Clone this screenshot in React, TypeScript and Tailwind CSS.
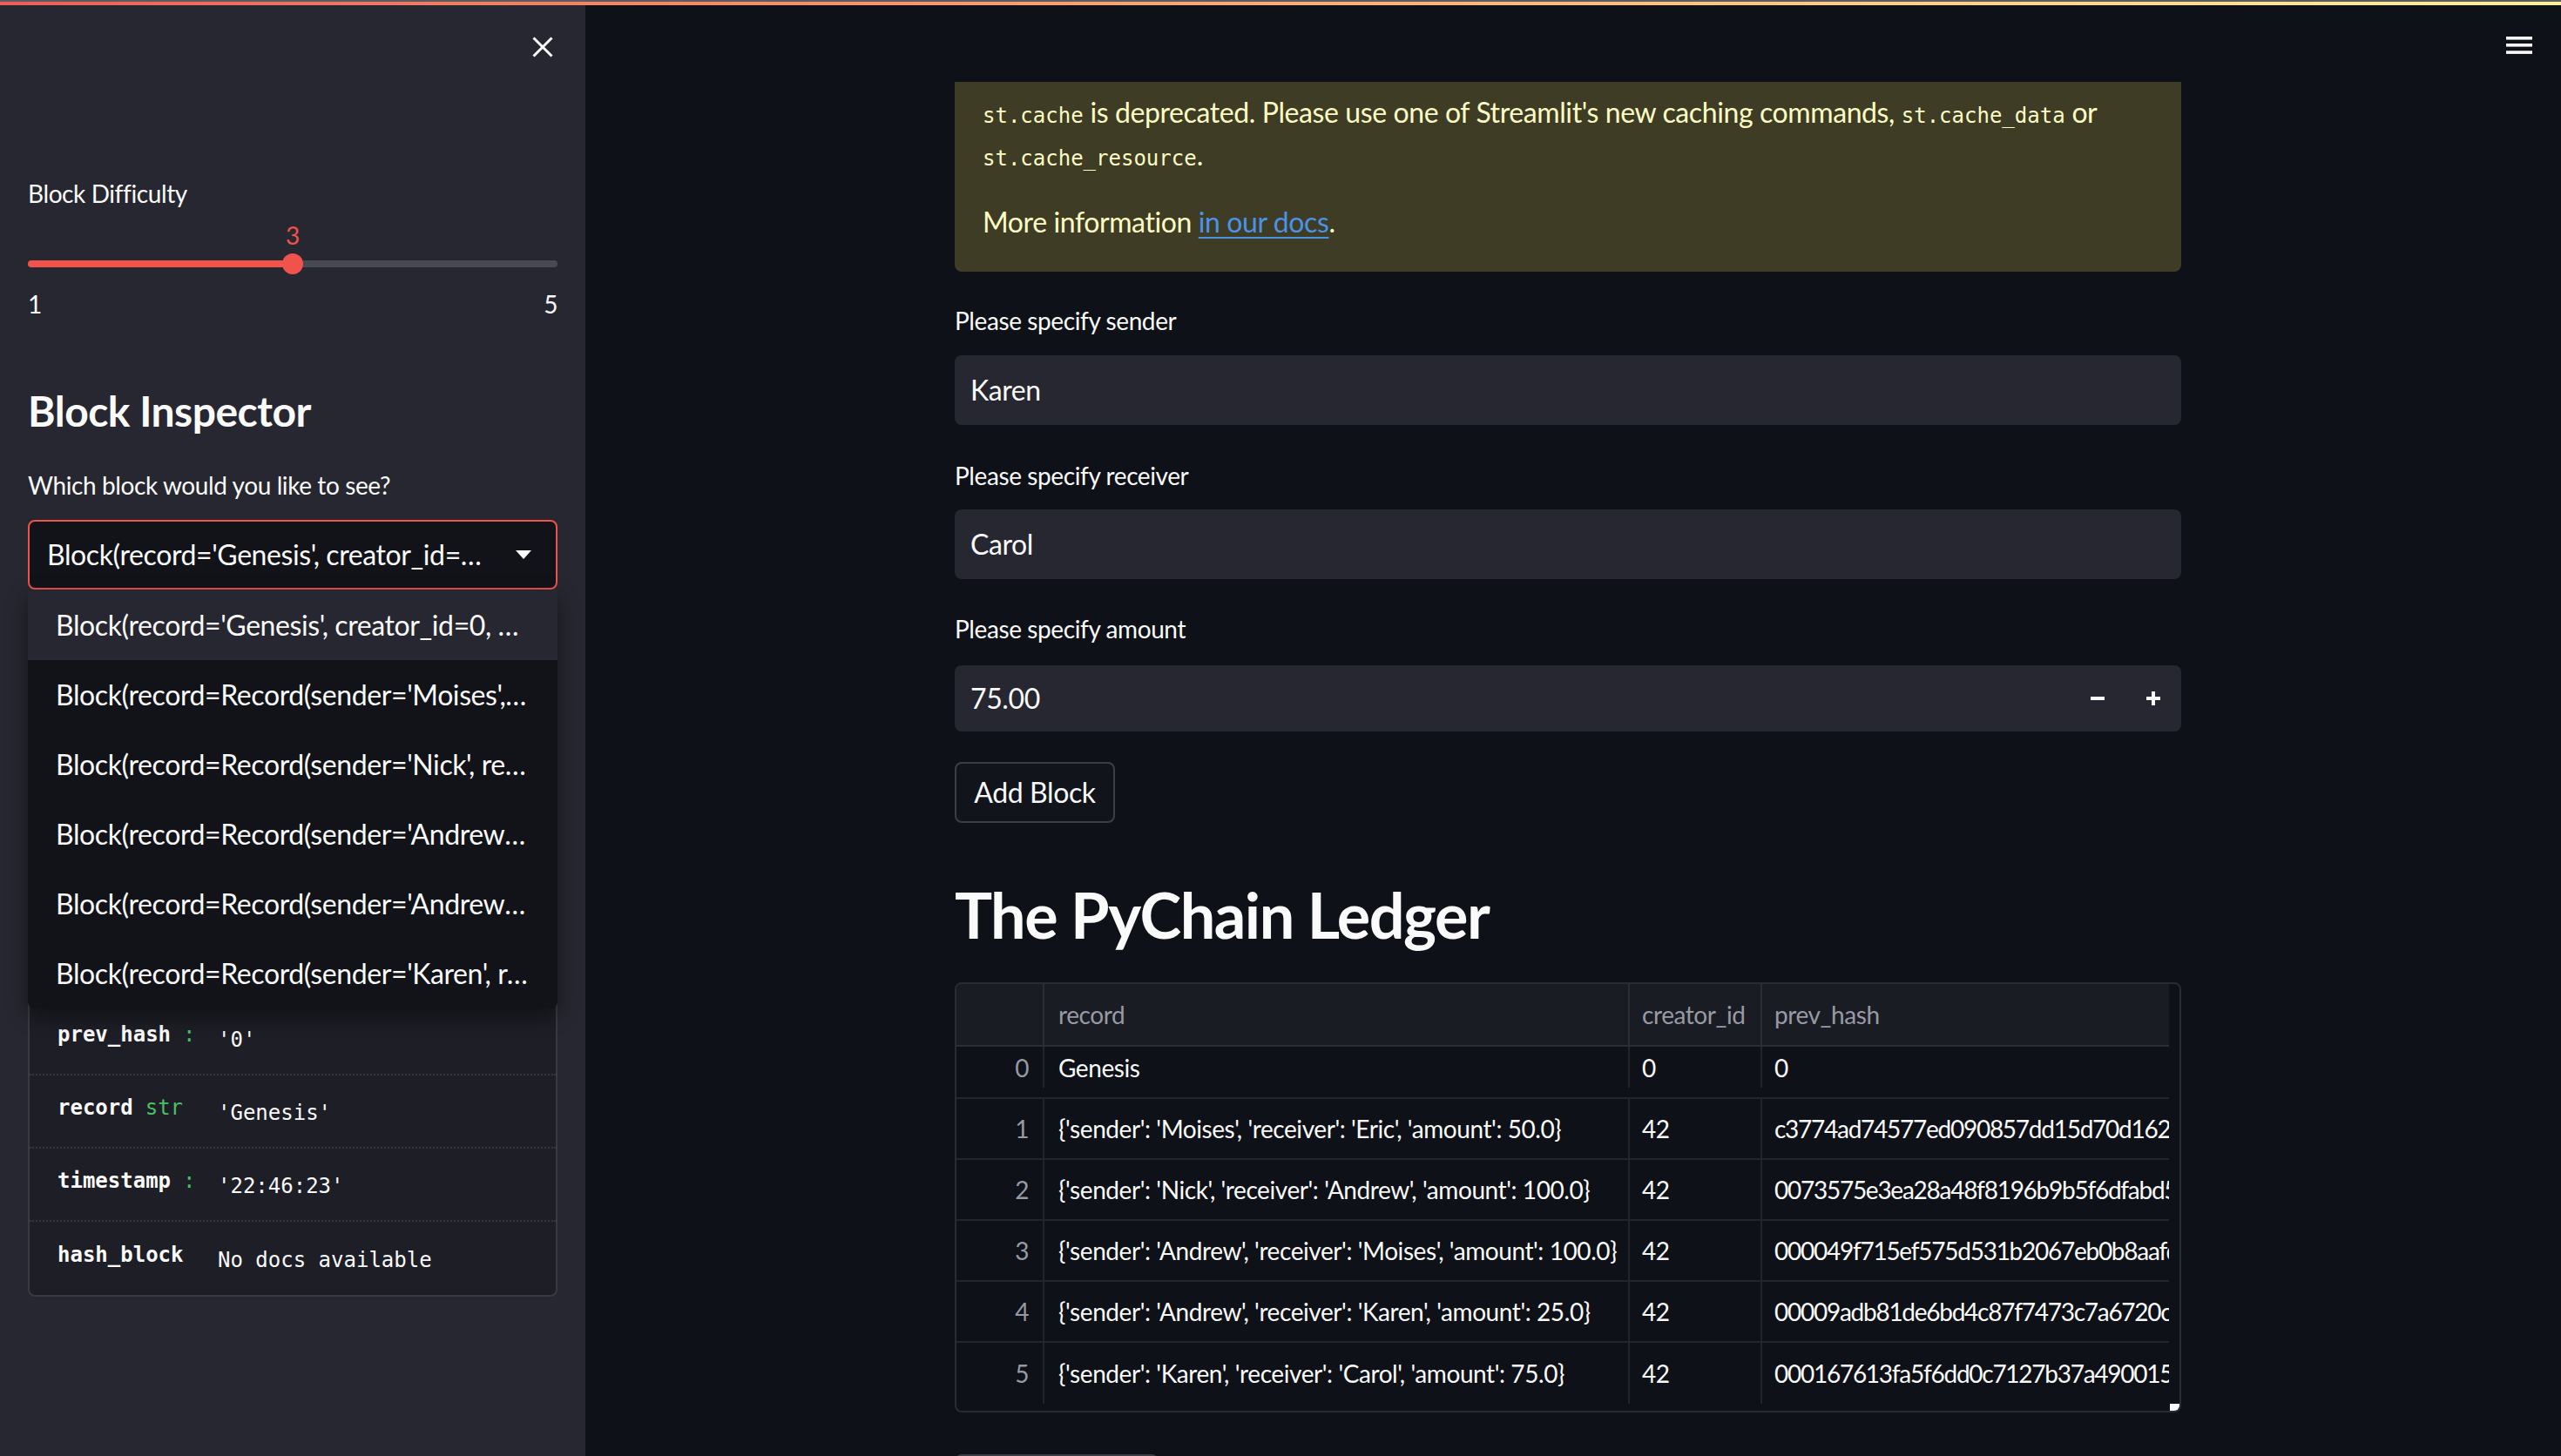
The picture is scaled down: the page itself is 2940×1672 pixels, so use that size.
import React from "react";

const options = [
  "Block(record='Genesis', creator_id=0, prev_hash='0', timestamp='22:46:23', nonce=0)",
  "Block(record=Record(sender='Moises', receiver='Eric', amount=50.0), creator_id=42)",
  "Block(record=Record(sender='Nick', receiver='Andrew', amount=100.0), creator_id=42)",
  "Block(record=Record(sender='Andrew', receiver='Moises', amount=100.0), creator_id=42)",
  "Block(record=Record(sender='Andrew', receiver='Karen', amount=25.0), creator_id=42)",
  "Block(record=Record(sender='Karen', receiver='Carol', amount=75.0), creator_id=42)",
];

const ledger = [
  { idx: 0, record: "Genesis", creator: "0", hash: "0" },
  {
    idx: 1,
    record: "{'sender': 'Moises', 'receiver': 'Eric', 'amount': 50.0}",
    creator: "42",
    hash: "c3774ad74577ed090857dd15d70d16263f0a9be2c41d7e8a",
  },
  {
    idx: 2,
    record: "{'sender': 'Nick', 'receiver': 'Andrew', 'amount': 100.0}",
    creator: "42",
    hash: "0073575e3ea28a48f8196b9b5f6dfabd57c0e1a93d2b44f1",
  },
  {
    idx: 3,
    record: "{'sender': 'Andrew', 'receiver': 'Moises', 'amount': 100.0}",
    creator: "42",
    hash: "000049f715ef575d531b2067eb0b8aafd4c3e1b9a0f27d65",
  },
  {
    idx: 4,
    record: "{'sender': 'Andrew', 'receiver': 'Karen', 'amount': 25.0}",
    creator: "42",
    hash: "00009adb81de6bd4c87f7473c7a6720c8e1f04b3d9a6c257",
  },
  {
    idx: 5,
    record: "{'sender': 'Karen', 'receiver': 'Carol', 'amount': 75.0}",
    creator: "42",
    hash: "000167613fa5f6dd0c7127b37a49001564b2e8d0c9f3a17e",
  },
];

const inspectRows = [
  { key: "prev_hash", type: ":", value: "'0'" },
  { key: "record", type: "str", value: "'Genesis'" },
  { key: "timestamp", type: ":", value: "'22:46:23'" },
  { key: "hash_block", type: "", value: "No docs available" },
];

const mono = "font-['DejaVu_Sans_Mono',monospace] tracking-normal";

const InspectRow = ({ k, type, value, last }: { k: string; type: string; value: string; last?: boolean }) => (
  <div
    className={`h-[84px] flex items-center pl-[32px] ${mono} text-[24px] ${
      last ? "" : "border-b-2 border-dotted border-[#33343d]"
    }`}
  >
    <div className="w-[184px] flex items-center gap-[14px] overflow-hidden whitespace-nowrap -mt-[9px]">
      <span className="font-bold text-[#fafafa]">{k}</span>
      <span className="text-[#4cbf63]">{type}</span>
    </div>
    <span className="text-[#fafafa] mt-[3px]">{value}</span>
  </div>
);

const Sidebar = () => (
  <aside className="w-[672px] shrink-0 h-full bg-[#262730] px-[32px] flex flex-col">
    <div className="pt-[42px] flex justify-end pr-[5px]">
      <svg width="24" height="24" viewBox="0 0 24 24">
        <path d="M1.5 1.5 L22.5 22.5 M22.5 1.5 L1.5 22.5" stroke="#fafafa" strokeWidth="3" />
      </svg>
    </div>

    <div className="mt-[136px] text-[28px] leading-[40px]">Block Difficulty</div>

    <div className="mt-[10px] text-[28px] leading-[36px] text-[#f0524c]">
      <span className="inline-block w-[32px] text-center ml-[288px]">3</span>
    </div>
    <div className="mt-[3px] h-[24px] relative flex items-center">
      <div className="h-[8px] w-[304px] bg-[#f0524c] rounded-l-full" />
      <div className="h-[8px] flex-1 bg-[#474953] rounded-r-full" />
      <div className="absolute left-[292px] top-0 w-[24px] h-[24px] rounded-full bg-[#f0524c]" />
    </div>
    <div className="mt-[16px] flex justify-between text-[28px] leading-[36px]">
      <span>1</span>
      <span>5</span>
    </div>

    <h2 className="mt-[76px] text-[48px] leading-[58px] font-bold tracking-[-0.5px]">Block Inspector</h2>
    <div className="mt-[36px] text-[28px] leading-[40px]">Which block would you like to see?</div>

    <div className="relative mt-[20px]">
      <div className="h-[80px] rounded-lg border-2 border-[#f0524c] bg-[#111319] flex items-center pl-[20px] pr-[28px]">
        <span className="w-[504px] truncate text-[32px]">{options[0]}</span>
        <div className="flex-1" />
        <svg width="18" height="10" viewBox="0 0 18 10">
          <polygon points="0,0 18,0 9,10" fill="#fafafa" />
        </svg>
      </div>

      {/* help() output of the selected block; its top rows sit under the open menu */}
      <div className="mt-[32px] rounded-lg border-2 border-[#393a43] bg-[#1d1e26]">
        <div className="h-[440px]" />
        {inspectRows.map((r, i) => (
          <InspectRow key={r.key} k={r.key} type={r.type} value={r.value} last={i === inspectRows.length - 1} />
        ))}
      </div>

      <div className="absolute left-0 right-0 top-[81px] z-10 rounded-b-lg overflow-hidden bg-[#111319] shadow-[0_8px_24px_rgba(0,0,0,0.45)]">
        {options.map((o, i) => (
          <div
            key={i}
            className={`h-[80px] flex items-center pl-[32px] text-[32px] ${i === 0 ? "bg-[#262730]" : ""}`}
          >
            <span className="w-[542px] truncate">{o}</span>
          </div>
        ))}
      </div>
    </div>
  </aside>
);

const Field = ({ label, value, top, gap }: { label: string; value: string; top: string; gap: string }) => (
  <>
    <div className={`${top} text-[28px] leading-[40px]`}>{label}</div>
    <div className={`${gap} h-[80px] rounded-lg bg-[#262730] flex items-center pl-[18px] text-[32px]`}>{value}</div>
  </>
);

const Ledger = () => (
  <div className="mt-[35px] w-[1408px] h-[494px] rounded-lg border-2 border-[#2a2c34] overflow-hidden text-[28px] tracking-[-0.015em]">
    <div className="w-[1392px]">
      <div className="h-[72px] flex bg-[#1a1c23] border-b-2 border-[#2c2e37] text-[#979aa3]">
        <div className="w-[101px] border-r-2 border-[#2c2e37]" />
        <div className="w-[672px] border-r-2 border-[#2c2e37] flex items-center pl-[16px]">record</div>
        <div className="w-[152px] border-r-2 border-[#2c2e37] flex items-center pl-[14px]">creator_id</div>
        <div className="flex-1 flex items-center pl-[14px]">prev_hash</div>
      </div>
      {ledger.map((r, i) => (
        <div
          key={r.idx}
          className={`flex ${i === 0 ? "h-[60px] pb-[11px]" : "h-[70px]"} ${
            i === ledger.length - 1 ? "" : "border-b-2 border-[#23252d]"
          }`}
        >
          <div className="w-[101px] border-r-2 border-[#23252d] flex items-center justify-end pr-[16px] text-[#979aa3]">
            {r.idx}
          </div>
          <div className="w-[672px] border-r-2 border-[#23252d] flex items-center pl-[16px] overflow-hidden whitespace-nowrap">
            {r.record}
          </div>
          <div className="w-[152px] border-r-2 border-[#23252d] flex items-center pl-[14px]">{r.creator}</div>
          <div className="flex-1 flex items-center pl-[14px] overflow-hidden whitespace-nowrap tracking-[-0.045em]">
            {r.hash}
          </div>
        </div>
      ))}
    </div>
    <div className="flex justify-end">
      <div className="w-[12px] h-[12px] bg-[#fafafa] rounded-br-[6px] -mr-[1px]" />
    </div>
  </div>
);

const Main = () => (
  <main className="flex-1 h-full flex flex-col">
    <div className="h-[94px] shrink-0 flex justify-end pt-[42px] pr-[33px]">
      <svg width="30" height="20" viewBox="0 0 30 20">
        <rect x="0" y="0" width="30" height="3.6" fill="#fafafa" />
        <rect x="0" y="8" width="30" height="3.6" fill="#fafafa" />
        <rect x="0" y="16.3" width="30" height="3.6" fill="#fafafa" />
      </svg>
    </div>

    <div className="ml-[424px] w-[1408px] flex flex-col">
      <div className="h-[218px] rounded-b-lg bg-[#3e3c25] px-[32px] pt-[10px] text-[#fdfbc4] text-[32px]">
        <p className="leading-[49px] whitespace-nowrap">
          <code className={`${mono} text-[24px] leading-none`}>st.cache</code> is deprecated. Please use one of
          Streamlit's new caching commands, <code className={`${mono} text-[24px] leading-none`}>st.cache_data</code>{" "}
          or
          <br />
          <code className={`${mono} text-[24px] leading-none`}>st.cache_resource</code>.
        </p>
        <p className="mt-[28px] leading-[49px]">
          More information{" "}
          <a className="text-[#4b93e6] underline underline-offset-[5px] decoration-2">in our docs</a>.
        </p>
      </div>

      <Field label="Please specify sender" value="Karen" top="mt-[36px]" gap="mt-[20px]" />
      <Field label="Please specify receiver" value="Carol" top="mt-[38px]" gap="mt-[19px]" />

      <div className="mt-[37px] text-[28px] leading-[40px]">Please specify amount</div>
      <div className="mt-[22px] h-[76px] rounded-lg bg-[#262730] flex items-center pl-[18px] text-[32px]">
        <span className="flex-1">75.00</span>
        <div className="w-[64px] h-full flex items-center justify-center">
          <div className="w-[16px] h-[4px] bg-[#fafafa]" />
        </div>
        <div className="w-[64px] h-full flex items-center justify-center">
          <svg width="16" height="16" viewBox="0 0 16 16">
            <rect x="0" y="6" width="16" height="4" fill="#fafafa" />
            <rect x="6" y="0" width="4" height="16" fill="#fafafa" />
          </svg>
        </div>
      </div>

      <button className="mt-[35px] h-[70px] w-[184px] rounded-lg border-2 border-[#3c3e47] bg-[#12141b] text-[32px] text-[#fafafa]">
        Add Block
      </button>

      <h1 className="mt-[62px] text-[72px] leading-[86px] font-bold tracking-[-1.5px]">The PyChain Ledger</h1>

      <Ledger />

      <button className="mt-[48px] h-[70px] w-[234px] rounded-lg border-2 border-[#3c3e47] bg-[#12141b] text-[32px] text-[#fafafa]">
        Validate Chain
      </button>
    </div>
  </main>
);

export default function App() {
  return (
    <div className="relative w-[2940px] h-[1672px] overflow-hidden flex bg-[#0e1117] text-[#fafafa] font-['Lato','Open_Sans',sans-serif] tracking-[-0.025em]">
      <div className="absolute top-0 left-0 right-0 z-20">
        <div className="h-[2px] bg-[#5c5c60]" />
        <div className="h-[4px] bg-gradient-to-r from-[#ea5f58] to-[#fdf29b]" />
      </div>
      <Sidebar />
      <Main />
    </div>
  );
}
